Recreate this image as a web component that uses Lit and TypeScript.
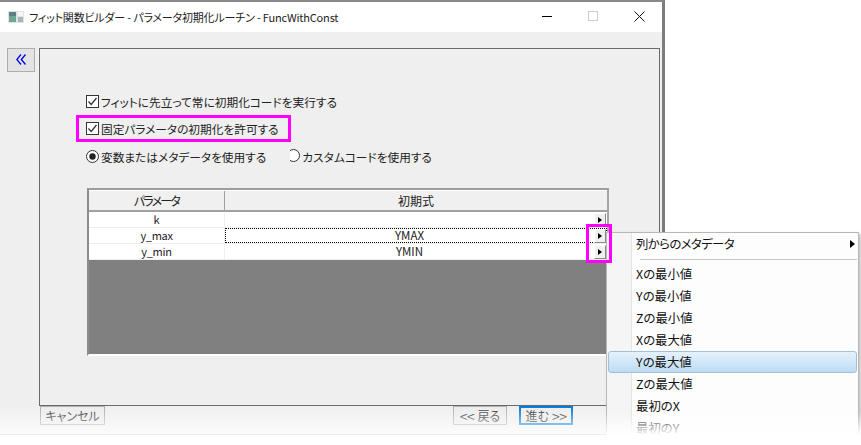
import { LitElement, html, css } from "lit";
import { customElement } from "lit/decorators.js";

const check = html`<svg class="box" viewBox="0 0 13 13" width="13" height="13"><rect x=".5" y=".5" width="12" height="12" fill="#fff" stroke="#333"/><path d="M2.5 6.5 5.2 9.4 10.5 3" fill="none" stroke="#333" stroke-width="1.3"/></svg>`;

const arrowBtn = html`<span class="arrow"><svg viewBox="0 0 4 6" width="4" height="6"><path d="M0 0 4 3 0 6z" fill="#000"/></svg></span>`;

@customElement("app-root")
export class AppRoot extends LitElement {
  static styles = css`
    :host { display: block; position: relative; width: 861px; height: 445px; overflow: hidden; background: #fff;
      font-family: "Noto Sans CJK JP", "Noto Sans", sans-serif; font-size: 11.7px; color: #222; font-feature-settings: "palt"; }
    .window { width: 665px; height: 434px; box-sizing: border-box; border-top: 2px solid #8a8a8a; border-right: 3px solid #7d7d7d;
      background: #efefef; display: flex; flex-direction: column; }
    .title { height: 30px; background: #fff; display: flex; align-items: center; padding: 0 0 0 8px; flex: none; }
    .title .ttl { margin-left: 5px; flex: 1; font-size: 11px; letter-spacing: -.18px; color: #222; white-space: nowrap; line-height: 16px; }
    .wbtns { display: flex; align-items: center; gap: 0; }
    .wbtn { width: 46px; height: 30px; box-sizing: border-box; padding-bottom: 2px; display: flex; align-items: center; justify-content: center; }
    .main { flex: 1; display: flex; align-items: flex-start; padding: 16px 3px 0 7px; min-height: 0; }
    .toggle { width: 28px; height: 24px; box-sizing: border-box; flex: none; background: #e3e3e3; border: 1px solid #adadad;
      display: flex; align-items: flex-start; justify-content: center; padding-top: 5px; margin-right: 4px; }
    .panel { width: 621px; height: 358px; box-sizing: border-box; border: 1px solid #6b6b6b; padding: 39px 0 0 46px; flex: none; }
    .opt { display: flex; align-items: center; gap: 2px; height: 27px; white-space: nowrap; line-height: 16px; }
    .box { flex: none; }
    .radios { display: flex; align-items: center; height: 28px; white-space: nowrap; }
    .radio { display: flex; align-items: center; gap: 2px; }
    .clip { width: 10px; height: 14px; overflow: hidden; display: flex; justify-content: flex-end; margin: 0 2px 0 24px; }
    .clip svg { flex: none; }
    .grid { margin: 18px 0 0 1px; width: 522px; height: 168px; box-sizing: border-box; border: 2px solid #9d9d9d; border-right-color: #a5a5a5; border-bottom-color: #fff;
      background: #808080; border-left-color: #8c8c8c; display: flex; flex-direction: column; }
    .row { display: grid; grid-template-columns: 136px 1fr; background: #fff; height: 16px; flex: none; line-height: 15px; text-align: center; font-size: 11.5px; border-bottom: 1px solid #efefef; box-sizing: border-box; }
    .row.head { height: 22px; background: #f0f0f0; line-height: 19px; border-bottom: 2px solid #a0a0a0; border-top: 1px solid #fff; font-size: 12px; }
    .row.head > div:first-child { border-right: 1px solid #a0a0a0; letter-spacing: -1.8px; }
    .row > div { position: relative; min-width: 0; }
    .row:not(.head) > div:first-child { border-right: 1px solid #efefef; font-size: 11px; letter-spacing: -.3px; }
    .row:not(.head) > div:last-child { padding-right: 13px; }
    .row.head > div { overflow: hidden; }
    .focus { outline: 1px dotted #000; outline-offset: -1px; }
    .arrow { position: absolute; right: 1px; top: 1px; width: 12px; height: 14px; box-sizing: border-box; background: #f0f0f0; border: 1px solid; border-color: #fff #8a8a8a #8a8a8a #fff;
      display: flex; align-items: center; justify-content: center; }
    .footer { height: 19px; display: flex; flex: none; padding: 0 0 0 40px; margin-bottom: 9px; font-size: 12px; color: #333; }
    .btn { height: 19px; box-sizing: border-box; border: 1px solid #adadad; background: #ececec; display: flex; align-items: center; justify-content: center; gap: 3px; line-height: 14px; white-space: nowrap; }
    .btn.cancel { width: 65px; }
    .btn.back { width: 54px; margin-left: 348px; }
    .btn.next { width: 54px; margin-left: 12px; border: 2px solid #0078d7; }
    .chev { font-size: 14px; letter-spacing: -.5px; }
    .fade { position: absolute; left: 0; top: 406px; width: 665px; height: 28px; background: linear-gradient(rgba(255,255,255,0), rgba(255,255,255,.8)); }
    .winline { position: absolute; left: 0; top: 434px; width: 665px; height: 1px; background: #eee; }
    .mark { position: absolute; border: 3px solid #ff00ff; box-sizing: border-box; }
    .m1 { left: 76px; top: 115px; width: 215px; height: 27px; }
    .m2 { left: 586px; top: 224px; width: 26px; height: 39px; }
    .menu { position: absolute; left: 606px; top: 232px; width: 253px; height: 213px; box-sizing: border-box; border: 1px solid #b8b8b8; border-bottom: 0;
      background: linear-gradient(90deg, #f5f5f5 24px, #fdfdfd 24px);
      padding: 0 1px 0 24px; font-size: 12.4px; color: #111; display: flex; flex-direction: column; box-shadow: 2px 2px 3px rgba(0,0,0,.25); }
    .menu::before { content: ""; position: absolute; left: 24px; top: 0; bottom: 0; width: 1px; background: #e4e4e4; }
    .mi { height: 22px; line-height: 22px; padding-left: 5px; position: relative; flex: none; white-space: nowrap; }
    .mi.first { height: 21px; letter-spacing: -.6px; }
    .mi .sub { position: absolute; right: 2px; top: 7px; }
    .sep { height: 1px; background: #c8c8c8; margin: 5px 0 3px 9px; flex: none; }
    .mi.hot { margin-left: -23px; margin-right: 0; box-sizing: border-box; border: 1px solid #a3c0d8; border-radius: 3px;
      background: linear-gradient(#e6f2fb, #bcdcf5); line-height: 20px; z-index: 1; padding-left: 27px; }
    .mfade { position: absolute; left: 606px; top: 412px; width: 255px; height: 33px; background: linear-gradient(rgba(255,255,255,0), #fff 70%); }
  `;

  render() {
    return html`
      <div class="window">
        <div class="title">
          <svg width="16" height="12" viewBox="0 0 16 12"><rect width="16" height="12" fill="#dfe5e5"/><rect x="1" y="1" width="7" height="10" fill="#6fa595"/><rect x="1" y="1" width="7" height="4" fill="#5a7f88"/><rect x="10" y="1" width="5" height="4" fill="#f7f7f7"/><rect x="10" y="6" width="5" height="5" fill="#aab5ba"/></svg>
          <span class="ttl">フィット関数ビルダー - パラメータ初期化ルーチン - FuncWithConst</span>
          <div class="wbtns">
            <span class="wbtn"><svg width="10" height="10"><path d="M0 5.5H10" stroke="#000"/></svg></span>
            <span class="wbtn"><svg width="10" height="10"><rect x=".5" y=".5" width="9" height="9" fill="none" stroke="#ccc"/></svg></span>
            <span class="wbtn"><svg width="11" height="11"><path d="M.5.5 10.5 10.5M10.5.5.5 10.5" stroke="#111"/></svg></span>
          </div>
        </div>
        <div class="main">
          <div class="toggle"><svg width="10" height="11" viewBox="0 0 10 11"><path d="M5 .5 .8 5.5 5 10.5M9.5 .5 5.3 5.5 9.5 10.5" fill="none" stroke="#0000f0" stroke-width="1.3"/></svg></div>
          <div class="panel">
            <div class="opt">${check}<span>フィットに先立って常に初期化コードを実行する</span></div>
            <div class="opt">${check}<span>固定パラメータの初期化を許可する</span></div>
            <div class="radios">
              <span class="radio"><svg width="13" height="13" viewBox="0 0 13 13"><circle cx="6.5" cy="6.5" r="6" fill="#fff" stroke="#333"/><circle cx="6.5" cy="6.5" r="3.2" fill="#222"/></svg>変数またはメタデータを使用する</span>
              <span class="clip"><svg width="13" height="13" viewBox="0 0 13 13"><circle cx="6.5" cy="6.5" r="6" fill="#fff" stroke="#333"/></svg></span>
              <span>カスタムコードを使用する</span>
            </div>
            <div class="grid">
              <div class="row head"><div>パラメータ</div><div>初期式</div></div>
              <div class="row"><div>k</div><div>${arrowBtn}</div></div>
              <div class="row"><div>y_max</div><div class="focus">YMAX${arrowBtn}</div></div>
              <div class="row"><div>y_min</div><div>YMIN${arrowBtn}</div></div>
            </div>
          </div>
        </div>
        <div class="footer">
          <div class="btn cancel">キャンセル</div>
          <div class="btn back"><span class="chev">&lt;&lt;</span><span>戻る</span></div>
          <div class="btn next"><span>進む</span><span class="chev">&gt;&gt;</span></div>
        </div>
      </div>
      <div class="fade"></div>
      <div class="winline"></div>
      <div class="menu">
        <div class="mi first">列からのメタデータ<svg class="sub" width="5" height="8" viewBox="0 0 5 8"><path d="M0 0 5 4 0 8z" fill="#000"/></svg></div>
        <div class="sep"></div>
        <div class="mi">Xの最小値</div>
        <div class="mi">Yの最小値</div>
        <div class="mi">Zの最小値</div>
        <div class="mi">Xの最大値</div>
        <div class="mi hot">Yの最大値</div>
        <div class="mi">Zの最大値</div>
        <div class="mi">最初のX</div>
        <div class="mi">最初のY</div>
      </div>
      <div class="mfade"></div>
      <div class="mark m1"></div>
      <div class="mark m2"></div>
    `;
  }
}
